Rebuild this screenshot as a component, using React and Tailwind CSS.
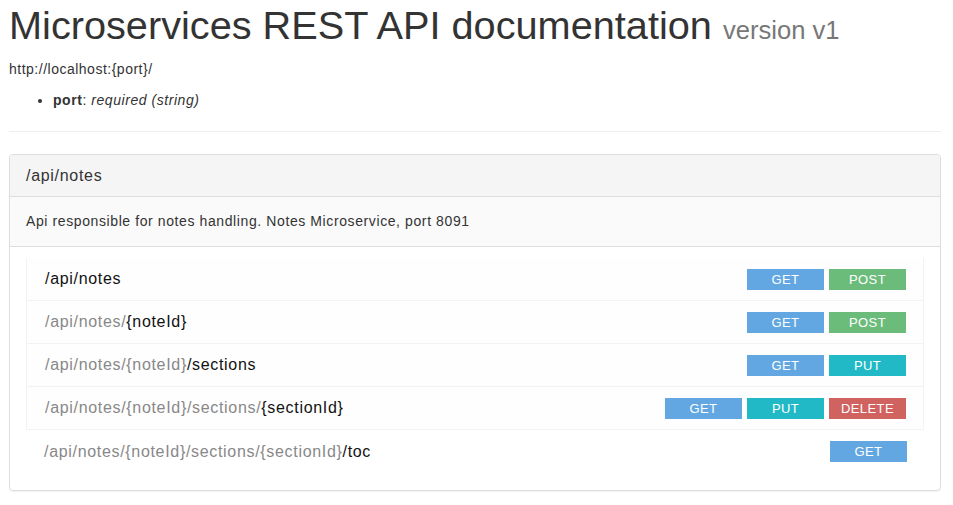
import React from 'react';

const METHOD_STYLES = {
  GET: 'bg-[#62a7e1]',
  POST: 'bg-[#6bbc7b]',
  PUT: 'bg-[#22b9c6]',
  DELETE: 'bg-[#d0625f]',
};

const resources = [
  { parts: [['/api/notes', true]], methods: ['GET', 'POST'] },
  { parts: [['/api/notes/', false], ['{noteId}', true]], methods: ['GET', 'POST'] },
  { parts: [['/api/notes/{noteId}', false], ['/sections', true]], methods: ['GET', 'PUT'] },
  { parts: [['/api/notes/{noteId}/sections/', false], ['{sectionId}', true]], methods: ['GET', 'PUT', 'DELETE'] },
  { parts: [['/api/notes/{noteId}/sections/{sectionId}', false], ['/toc', true]], methods: ['GET'] },
];

const MethodButton = ({ method }) => (
  <span
    className={`flex items-center justify-center w-[77px] h-[21px] text-[13px] tracking-[0.4px] leading-none text-white ${METHOD_STYLES[method]}`}
  >
    {method}
  </span>
);

const App = () => {
  return (
    <div className="min-h-[505px] bg-white pl-[9px] pr-[12px] pb-4 text-[#333] font-['Liberation_Sans',Arial,sans-serif]">
      {/* Title */}
      <h1 className="pt-[2px] text-[39.7px] leading-[46px] text-[#333]">
        Microservices REST API documentation{' '}
        <small className="text-[25.6px] text-[#777]">version v1</small>
      </h1>

      {/* Base URI */}
      <p className="mt-[6px] text-[14px] tracking-[0.5px] leading-5">http://localhost:{'{port}'}/</p>
      <ul className="mt-[11px] pl-[44px] list-disc text-[14px] tracking-[0.55px] leading-5">
        <li>
          <strong>port</strong>: <em>required (string)</em>
        </li>
      </ul>

      <hr className="mt-[21px] border-t border-[#eee]" />

      {/* Resource panel */}
      <div className="mt-[22px] border border-[#ddd] rounded-[4px] shadow-[0_1px_1px_rgba(0,0,0,0.05)]">
        <div className="h-[42px] flex items-center px-[16px] bg-[#f5f5f5] border-b border-[#ddd] rounded-t-[3px] text-[16px] tracking-[0.7px] text-[#333]">
          /api/notes
        </div>
        <div className="h-[50px] flex items-center px-[16px] bg-[#fafafa] border-b border-[#ddd] text-[14px] tracking-[0.6px]">
          Api responsible for notes handling. Notes Microservice, port 8091
        </div>
        <div className="px-[16px] pt-[11px] pb-[17px]">
          {resources.map((r, i) => (
            <div
              key={i}
              className={`h-[43px] flex items-center justify-between pl-[18px] pr-[17px] text-[16px] tracking-[0.68px] ${
                i < resources.length - 1 ? 'border-b border-x border-[#f3f3f3] bg-[#fefefe]' : ''
              }`}
            >
              <span>
                {r.parts.map(([text, strong], j) => (
                  <span key={j} className={strong ? 'text-[#111]' : 'text-[#888]'}>
                    {text}
                  </span>
                ))}
              </span>
              <div className="flex gap-[5px]">
                {r.methods.map((m) => (
                  <MethodButton key={m} method={m} />
                ))}
              </div>
            </div>
          ))}
        </div>
      </div>
    </div>
  );
};

export default App;
